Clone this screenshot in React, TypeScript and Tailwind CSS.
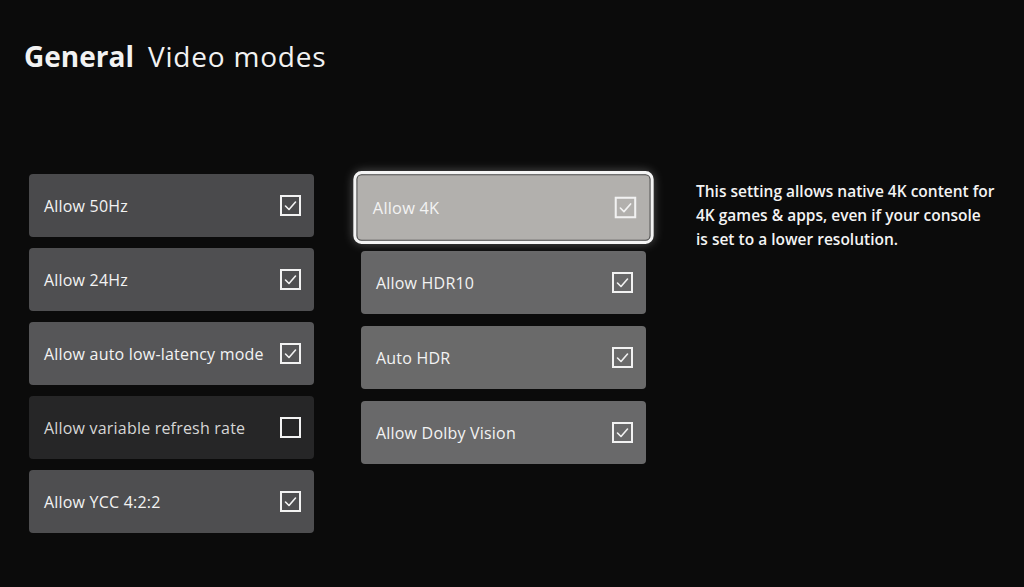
import React from "react";

type Setting = {
  label: string;
  checked: boolean;
  bg: string;
  dim?: boolean;
  focused?: boolean;
};

const leftSettings: Setting[] = [
  { label: "Allow 50Hz", checked: true, bg: "bg-[#4a4a4c]" },
  { label: "Allow 24Hz", checked: true, bg: "bg-[#4f4f51]" },
  { label: "Allow auto low-latency mode", checked: true, bg: "bg-[#565658]" },
  { label: "Allow variable refresh rate", checked: false, bg: "bg-[#262627]", dim: true },
  { label: "Allow YCC 4:2:2", checked: true, bg: "bg-[#4e4e50]" },
];

const rightSettings: Setting[] = [
  { label: "Allow 4K", checked: true, bg: "bg-[#b2b0ad]", focused: true },
  { label: "Allow HDR10", checked: true, bg: "bg-[#676768]" },
  { label: "Auto HDR", checked: true, bg: "bg-[#6a6a6a]" },
  { label: "Allow Dolby Vision", checked: true, bg: "bg-[#69696a]" },
];

const CheckBox = ({ checked }: { checked: boolean }) => (
  <div className="w-[21px] h-[21px] border-2 border-[#f2f2f2] flex items-center justify-center shrink-0">
    {checked && (
      <svg width="15" height="15" viewBox="0 0 15 15" fill="none">
        <polyline
          points="2.5,8 6,11.5 12.5,4"
          stroke="#f2f2f2"
          strokeWidth="1.6"
          strokeLinecap="round"
          strokeLinejoin="round"
        />
      </svg>
    )}
  </div>
);

const Tile = ({ setting }: { setting: Setting }) => (
  <div
    className={`h-[63px] w-[285px] rounded-[4px] flex items-center justify-between pl-[15px] pr-[13px] ${setting.bg} ${
      setting.focused
        ? "scale-[1.025] outline-[3px] outline-solid outline-[#f4f4f4] outline-offset-[1px] shadow-[0_0_10px_3px_rgba(255,255,255,0.35)]"
        : ""
    }`}
  >
    <span
      className={`text-[16px] leading-none tracking-[0.2px] ${
        setting.dim ? "text-[#d6d6d6]" : "text-[#f3f3f3]"
      }`}
    >
      {setting.label}
    </span>
    <CheckBox checked={setting.checked} />
  </div>
);

export default function App() {
  return (
    <div
      className="w-[1024px] h-[587px] bg-[#0b0b0b] overflow-hidden text-white"
      style={{ fontFamily: '"Open Sans", "Noto Sans", sans-serif' }}
    >
      <div className="pl-[24px] pt-[40px] flex items-baseline gap-[14px]">
        <h1 className="text-[28px] font-bold leading-[32px] text-[#f2f2f2]">General</h1>
        <h2 className="text-[28px] font-normal leading-[32px] tracking-[0.8px] text-[#f2f2f2]">Video modes</h2>
      </div>

      <div className="flex pl-[29px] pt-[102px]">
        <div className="flex flex-col gap-[11px]">
          {leftSettings.map((s) => (
            <Tile key={s.label} setting={s} />
          ))}
        </div>

        <div className="flex flex-col gap-[12px] ml-[47px] mt-[2px]">
          {rightSettings.map((s) => (
            <Tile key={s.label} setting={s} />
          ))}
        </div>

        <p className="ml-[50px] mt-[5px] w-[320px] text-[15.5px] leading-[24px] font-semibold text-[#f4f4f4]">
          This setting allows native 4K content for
          <br />
          4K games &amp; apps, even if your console
          <br />
          is set to a lower resolution.
        </p>
      </div>
    </div>
  );
}
